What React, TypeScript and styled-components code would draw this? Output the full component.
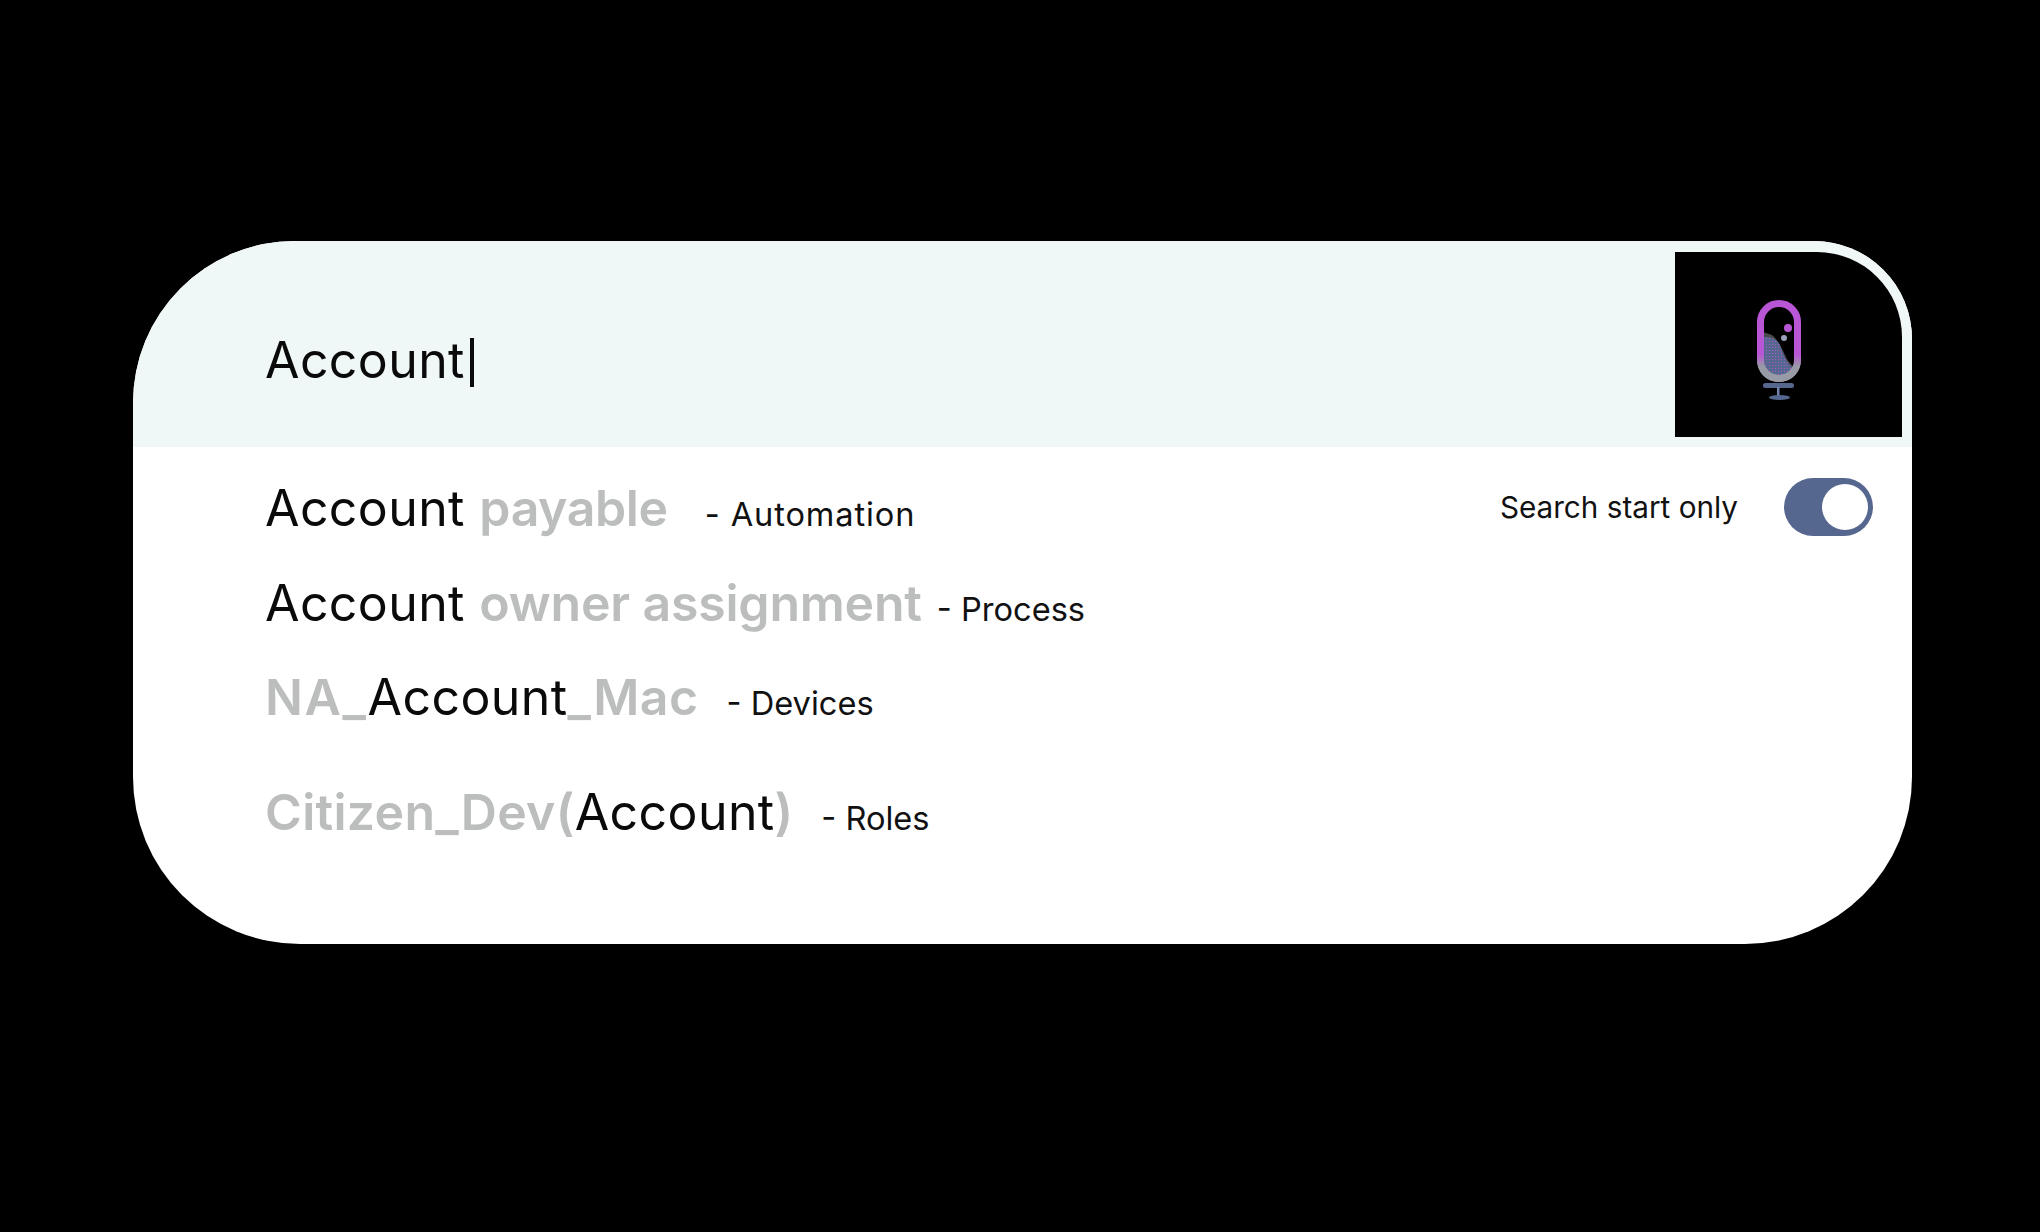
import React from "react";
import styled, { createGlobalStyle } from "styled-components";

const Global = createGlobalStyle`
  html, body { margin: 0; padding: 0; background: #000; }
  body { font-family: "Inter", "Lato", sans-serif; }
`;

const Page = styled.div`
  width: 2040px;
  height: 1232px;
  background: #000;
  padding: 241px 128px 0 133px;
  box-sizing: border-box;
`;

const Card = styled.div`
  width: 1779px;
  height: 703px;
  background: #fff;
  border-radius: 162px 98px 167px 167px;
  overflow: hidden;
  display: flex;
  flex-direction: column;
`;

const Header = styled.div`
  height: 206px;
  flex: none;
  background: #f0f8f7;
  box-sizing: border-box;
  padding: 11px 10px 10px 132px;
  display: flex;
  align-items: center;
  justify-content: space-between;
`;

const Query = styled.div`
  display: flex;
  align-items: center;
  line-height: 60px;
  margin-top: 30px;
  font-size: 50px;
  color: #0a0a0a;
  letter-spacing: 0.4px;
`;

const Caret = styled.span`
  display: inline-block;
  width: 4px;
  height: 49px;
  background: #0a0a0a;
  margin-left: 5px;
  margin-top: 6px;
`;

const LogoBox = styled.div`
  width: 227px;
  align-self: stretch;
  background: #000;
  border-top-right-radius: 85px;
  display: flex;
  align-items: flex-start;
`;

const Mic = styled.svg`
  width: 60px;
  height: 110px;
  margin-top: 43px;
  margin-left: 75px;
`;

const Results = styled.div`
  flex: 1;
  padding: 0 38px 0 132px;
  position: relative;
`;

const Row = styled.div<{ $top: number }>`
  display: flex;
  align-items: baseline;
  height: 60px;
  margin-top: ${(p) => p.$top}px;
  line-height: 60px;
`;

const Name = styled.span`
  font-size: 50px;
  font-weight: 400;
  color: #0a0a0a;
  letter-spacing: 0.4px;
`;

const Dim = styled.span<{ $track?: number }>`
  color: #bcbdbd;
  font-weight: 600;
  letter-spacing: ${(p) => p.$track ?? 0}px;
`;

const Category = styled.span<{ $gap: number; $track?: number }>`
  font-size: 32.6px;
  color: #111;
  margin-left: ${(p) => p.$gap}px;
  letter-spacing: ${(p) => p.$track ?? 0}px;
`;

const Switcher = styled.div`
  position: absolute;
  top: 31px;
  right: 39px;
  display: flex;
  align-items: center;
  gap: 46px;
`;

const SwitchLabel = styled.span`
  font-size: 29.7px;
  color: #111;
`;

const Track = styled.div`
  width: 89px;
  height: 58px;
  border-radius: 29px;
  background: #56678f;
  position: relative;
`;

const Knob = styled.div`
  position: absolute;
  top: 6px;
  right: 5px;
  width: 46px;
  height: 46px;
  border-radius: 50%;
  background: #fff;
`;

export default function App() {
  return (
    <Page>
      <Global />
      <Card>
        <Header>
          <Query>
            Account
            <Caret />
          </Query>
          <LogoBox>
            <Mic viewBox="0 0 60 110">
              <defs>
                <linearGradient id="ring" x1="0" y1="0" x2="0" y2="1">
                  <stop offset="0.68" stopColor="#b956d6" />
                  <stop offset="0.84" stopColor="#989aa5" />
                </linearGradient>
                <pattern id="dots" width="3" height="3" patternUnits="userSpaceOnUse">
                  <rect width="3" height="3" fill="#56678f" />
                  <circle cx="1.5" cy="1.5" r="0.6" fill="#b956d6" />
                </pattern>
              </defs>
              <path d="M13 37 L22 40 C27 44 31 52 34 58 C37 65 40 69 44 72 L44 78 L13 78 Z" fill="#4a4a4e" />
              <path d="M13 42 C20 42 27 43 30 50 C33 58 35 66 42 72 C40 78 34 82 28 82 C20 82 13 76 13 66 Z" fill="url(#dots)" />
              <path d="M10 64 C10 76 19 80 29 80 C39 80 48 76 48 64 L51 64 C51 78 41 87 29 87 C17 87 7 78 7 64 Z" fill="#989aa5" />
              <rect x="10.5" y="8.5" width="37" height="75" rx="18.5" fill="none" stroke="url(#ring)" strokeWidth="7" />
              <circle cx="38" cy="33" r="4" fill="#b956d6" />
              <circle cx="34" cy="43" r="3" fill="#9aa3bb" />
              <rect x="13" y="88" width="31" height="5" rx="2.5" fill="#56678f" />
              <rect x="27" y="92" width="2.5" height="9" fill="#7284aa" />
              <ellipse cx="29.5" cy="102.5" rx="10.5" ry="2.6" fill="#56678f" />
            </Mic>
          </LogoBox>
        </Header>
        <Results>
          <Row $top={31}>
            <Name>
              Account <Dim $track={-0.4}>payable</Dim>
            </Name>
            <Category $gap={37} $track={0.9}>- Automation</Category>
          </Row>
          <Row $top={35}>
            <Name>
              Account <Dim $track={-0.2}>owner assignment</Dim>
            </Name>
            <Category $gap={15}>- Process</Category>
          </Row>
          <Row $top={34}>
            <Name>
              <Dim $track={1.6}>NA_</Dim>Account<Dim $track={0.5}>_Mac</Dim>
            </Name>
            <Category $gap={28}>- Devices</Category>
          </Row>
          <Row $top={55}>
            <Name>
              <Dim $track={0.3}>Citizen_Dev(</Dim>Account<Dim>)</Dim>
            </Name>
            <Category $gap={28}>- Roles</Category>
          </Row>
          <Switcher>
            <SwitchLabel>Search start only</SwitchLabel>
            <Track>
              <Knob />
            </Track>
          </Switcher>
        </Results>
      </Card>
    </Page>
  );
}
